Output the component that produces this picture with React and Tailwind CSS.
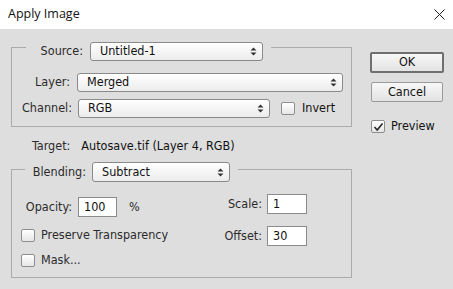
import React from "react";

const font = "font-['DejaVu_Sans_Condensed','DejaVu_Sans',sans-serif]";

function Arrows() {
  return (
    <svg width="7" height="9" viewBox="0 0 7 9" className="shrink-0">
      <path d="M3.5 0.5 L6.5 3.5 L0.5 3.5 Z" fill="#333" />
      <path d="M3.5 8.5 L6.5 5.5 L0.5 5.5 Z" fill="#333" />
    </svg>
  );
}

function Select({ value, w, h = "h-[19px]" }) {
  return (
    <div
      className={`${w} ${h} shrink-0 flex items-center justify-between pl-[9px] pr-[5px] border border-[#8a8a8a] rounded-[3px] bg-gradient-to-b from-white to-[#ececec] text-[#111]`}
    >
      <span className="leading-none">{value}</span>
      <Arrows />
    </div>
  );
}

function Check({ checked }) {
  return (
    <div className="w-[14px] h-[13px] shrink-0 border border-[#8e8e8e] rounded-[2px] bg-gradient-to-b from-white to-[#e6e6e6] flex items-center justify-center">
      {checked && (
        <svg width="11" height="10" viewBox="0 0 11 10">
          <path d="M1.5 5 L4.2 8 L9.5 1.5" fill="none" stroke="#222" strokeWidth="1.5" />
        </svg>
      )}
    </div>
  );
}

function Input({ value, w = "w-[40px]" }) {
  return (
    <div className={`${w} h-[20px] shrink-0 border border-[#8a8a8a] bg-white flex items-center pl-[5px] text-[#111]`}>
      <span className="leading-none">{value}</span>
    </div>
  );
}

export default function App() {
  return (
    <div className={`w-[453px] h-[289px] overflow-hidden bg-[#dedede] ${font} text-[12.5px] text-[#2b2b2b]`}>
      {/* title bar */}
      <div className="h-[29px] bg-white flex items-center justify-between pl-[8px] pr-[8px]">
        <span className="font-['Open_Sans',sans-serif] text-[12.5px] text-[#111]">Apply Image</span>
        <svg width="11" height="11" viewBox="0 0 11 11">
          <path d="M0.5 0.5 L10.5 10.5 M10.5 0.5 L0.5 10.5" stroke="#222" strokeWidth="1" />
        </svg>
      </div>

      <div className="flex">
        {/* left block */}
        <div className="ml-[11px] w-[341px] flex flex-col pt-[13px]">
          {/* group 1 header */}
          <div className="flex h-[19px]">
            <div className="w-[15px] mt-[5px] border-l border-t border-[#ababab]" />
            <div className="w-[64px] flex items-center justify-end pr-[7px]">Source:</div>
            <Select value="Untitled-1" w="w-[173px]" />
            <div className="w-[8px]" />
            <div className="flex-1 mt-[5px] border-t border-r border-[#ababab]" />
          </div>
          {/* group 1 body */}
          <div className="border-l border-r border-b border-[#ababab] pt-[12px] pb-[8px] flex flex-col gap-[7px]">
            <div className="flex items-center">
              <div className="w-[59px] text-right pr-[1px]">Layer:</div>
              <div className="w-[6px]" />
              <Select value="Merged" w="w-[266px]" />
            </div>
            <div className="flex items-center">
              <div className="w-[60px] text-right">Channel:</div>
              <div className="w-[6px]" />
              <Select value="RGB" w="w-[192px]" />
              <div className="ml-[11px]">
                <Check />
              </div>
              <span className="ml-[7px] text-[#111]">Invert</span>
            </div>
          </div>

          {/* target */}
          <div className="h-[16px] mt-[11px] flex items-center pl-[21px]">
            <span>Target:</span>
            <span className="ml-[11px] text-[#111]">Autosave.tif (Layer 4, RGB)</span>
          </div>

          {/* group 2 header */}
          <div className="flex h-[20px] mt-[8px]">
            <div className="w-[14px] mt-[7px] border-l border-t border-[#ababab]" />
            <div className="w-[67px] flex items-center justify-end pr-[6px]">Blending:</div>
            <Select value="Subtract" w="w-[138px]" h="h-[20px]" />
            <div className="w-[8px]" />
            <div className="flex-1 mt-[7px] border-t border-r border-[#ababab]" />
          </div>
          {/* group 2 body */}
          <div className="h-[96px] border-l border-r border-b border-[#ababab] flex">
            <div className="w-[198px] flex flex-col pt-[15px]">
              <div className="flex items-center h-[20px]">
                <div className="w-[60px] text-right">Opacity:</div>
                <div className="w-[6px]" />
                <Input value="100" w="w-[39px]" />
                <span className="ml-[12px]">%</span>
              </div>
              <div className="flex items-center h-[13px] mt-[12px] pl-[9px]">
                <Check />
                <span className="ml-[6px] leading-none">Preserve Transparency</span>
              </div>
              <div className="flex items-center h-[13px] mt-[12px] pl-[9px]">
                <Check />
                <span className="ml-[6px] leading-none">Mask...</span>
              </div>
            </div>
            <div className="flex flex-col pt-[12px] gap-[12px]">
              <div className="flex items-center h-[20px]">
                <div className="w-[52px] text-right">Scale:</div>
                <div className="w-[5px]" />
                <Input value="1" />
              </div>
              <div className="flex items-center h-[20px]">
                <div className="w-[52px] text-right">Offset:</div>
                <div className="w-[5px]" />
                <Input value="30" />
              </div>
            </div>
          </div>
        </div>

        {/* right buttons */}
        <div className="ml-[18px] pt-[23px] flex flex-col">
          <div className="w-[74px] h-[21px] border-2 border-[#6f6f6f] rounded-[2px] bg-gradient-to-b from-[#f7f7f7] to-[#e3e3e3] flex items-center justify-center text-[#111]">
            OK
          </div>
          <div className="ml-[1px] mt-[9px] w-[72px] h-[20px] border border-[#9a9a9a] rounded-[2px] bg-gradient-to-b from-[#f7f7f7] to-[#e3e3e3] flex items-center justify-center text-[#111]">
            Cancel
          </div>
          <div className="ml-[1px] mt-[18px] flex items-center h-[13px]">
            <Check checked />
            <span className="ml-[6px] leading-none text-[#111]">Preview</span>
          </div>
        </div>
      </div>
    </div>
  );
}
